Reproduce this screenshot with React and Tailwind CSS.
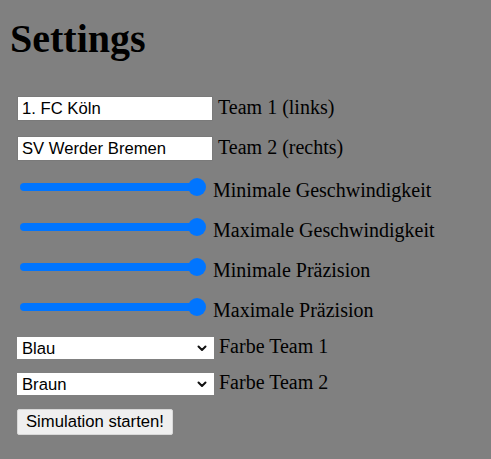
import React from 'react';

const serif = { fontFamily: '"Liberation Serif", "Times New Roman", serif' };
const sans = { fontFamily: '"Liberation Sans", Arial, sans-serif' };

const TextRow = ({ value, label, className = '' }) => (
    <div className={`flex items-start h-[25px] ${className}`}>
        <input
            type="text"
            defaultValue={value}
            style={sans}
            className="w-[196px] h-[25px] bg-white border border-[#7a7a7a] px-[4px] text-[16.67px] text-black outline-none"
        />
        <span className="ml-[5px] text-[20px] leading-[23px] text-black">{label}</span>
    </div>
);

const SliderRow = ({ label, className = '' }) => (
    <div className={`flex items-start h-[20px] ${className}`}>
        <div className="flex items-center h-[20px] ml-[3px]">
            <div className="w-[177px] h-[8px] rounded-full bg-[#0075ff]" />
            <div className="w-[18px] h-[18px] -ml-[9px] rounded-full bg-[#0075ff]" />
        </div>
        <span className="ml-[7px] mt-[2px] text-[20px] leading-[23px] text-black">{label}</span>
    </div>
);

const SelectRow = ({ value, label, className = '' }) => (
    <div className={`flex items-start h-[22px] ${className}`}>
        <div
            style={sans}
            className="w-[197px] h-[22px] bg-white flex items-center justify-between pl-[5px] pr-[7px] text-[16.67px] text-black"
        >
            <span>{value}</span>
            <svg width="10" height="7" viewBox="0 0 10 7" fill="none" stroke="#111" strokeWidth="2" strokeLinecap="round" strokeLinejoin="round">
                <polyline points="1.5,1.5 5,5 8.5,1.5" />
            </svg>
        </div>
        <span className="ml-[5px] -mt-[2px] text-[20px] leading-[23px] text-black">{label}</span>
    </div>
);

export default function App() {
    return (
        <div style={serif} className="min-h-screen w-full bg-[#808080] pl-[10px] pt-[16px] text-black">
            <h1 className="text-[40px] font-bold leading-[46px]">Settings</h1>

            <div className="mt-[34px] pl-[7px] flex flex-col">
                <TextRow value="1. FC Köln" label="Team 1 (links)" />
                <TextRow value="SV Werder Bremen" label="Team 2 (rechts)" className="mt-[15px]" />

                <SliderRow label="Minimale Geschwindigkeit" className="mt-[16px]" />
                <SliderRow label="Maximale Geschwindigkeit" className="mt-[20px]" />
                <SliderRow label="Minimale Präzision" className="mt-[20px]" />
                <SliderRow label="Maximale Präzision" className="mt-[20px]" />

                <SelectRow value="Blau" label="Farbe Team 1" className="mt-[20px]" />
                <SelectRow value="Braun" label="Farbe Team 2" className="mt-[14px]" />

                <div className="mt-[14px]">
                    <button
                        style={sans}
                        className="h-[26px] px-[8px] bg-[#efefef] border border-[#d8d8d8] rounded-[2px] text-[16.67px] leading-[20px] text-black"
                    >
                        Simulation starten!
                    </button>
                </div>
            </div>
        </div>
    );
}
